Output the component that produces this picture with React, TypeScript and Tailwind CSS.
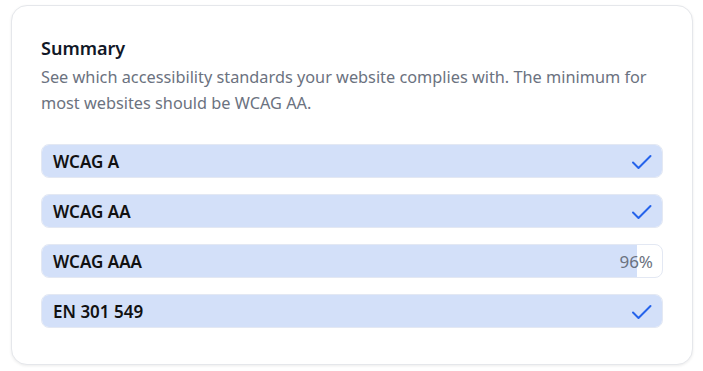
import React from "react";

const items = [
  { name: "WCAG A", pct: 100 },
  { name: "WCAG AA", pct: 100 },
  { name: "WCAG AAA", pct: 96 },
  { name: "EN 301 549", pct: 100 },
];

function Check() {
  return (
    <svg width="21" height="16" viewBox="0 0 21 16" fill="none" stroke="#2563eb" strokeWidth="2" strokeLinecap="round" strokeLinejoin="round">
      <path d="M2 8.5 7.5 14 19.5 2" />
    </svg>
  );
}

export default function App() {
  return (
    <div className="min-h-[371px] bg-white pl-[11px] pt-[5px]" style={{ fontFamily: '"Noto Sans", "Open Sans", sans-serif' }}>
      <div className="w-[682px] h-[360px] rounded-2xl border border-[#e5e7eb] bg-white px-[29px] pt-[28px] shadow-[0_1px_3px_rgba(0,0,0,0.08)]">
        <h2 className="text-[18px] leading-[28px] font-semibold text-[#111827]">Summary</h2>
        <p className="mt-[3px] text-[16.3px] leading-[25.5px] text-[#6b7280]">
          See which accessibility standards your website complies with. The minimum for most websites should be WCAG AA.
        </p>
        <div className="mt-[28px] flex flex-col gap-[16px]">
          {items.map((it) => (
            <div key={it.name} className="relative h-[34px] rounded-lg border border-[#e3e8f3] bg-white overflow-hidden">
              <div className="absolute inset-y-0 left-0 bg-[#d3e0f9]" style={{ width: `${it.pct}%` }} />
              <div className="relative flex h-full items-center justify-between pl-[11px] pr-[10px] pt-px">
                <span className="text-[17px] font-semibold text-[#111111]">{it.name}</span>
                {it.pct === 100 ? <Check /> : <span className="text-[17px] text-[#6b7280] -mr-[1px]">{it.pct}%</span>}
              </div>
            </div>
          ))}
        </div>
      </div>
    </div>
  );
}
